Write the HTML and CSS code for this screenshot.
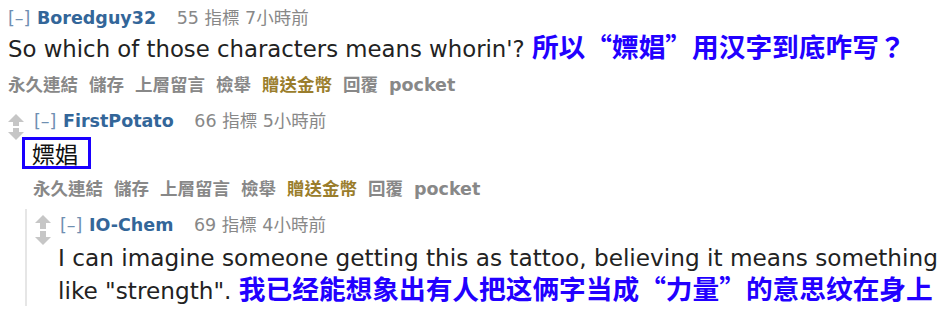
FILE: index.html
```html
<!DOCTYPE html>
<html lang="zh-Hant">

<head>
  <meta charset="UTF-8">
  <title>comments</title>
  <link rel="stylesheet" href="styles.css">
</head>

<body>
  <div class="comment top">
    <div class="entry">
      <p class="tagline">
        <span class="expand">[–]</span>
        <span class="author">Boredguy32</span>
        <span class="score">55 指標 7小時前</span>
      </p>
      <div class="md">
        So which of those characters means whorin'? <b class="note">所以“嫖娼”用汉字到底咋写？</b>
      </div>
      <ul class="buttons">
        <li>永久連結</li>
        <li>儲存</li>
        <li>上層留言</li>
        <li>檢舉</li>
        <li class="gild">贈送金幣</li>
        <li>回覆</li>
        <li>pocket</li>
      </ul>
    </div>

    <div class="comment second">
      <div class="midcol">
        <svg width="16" height="26" viewBox="0 0 16 26">
          <path d="M8 0 L16 8 L11 8 L11 12 L5 12 L5 8 L0 8 Z" fill="#c6c6c6"/>
          <path d="M8 26 L16 18 L11 18 L11 14 L5 14 L5 18 L0 18 Z" fill="#c6c6c6"/>
        </svg>
      </div>
      <div class="entry">
        <p class="tagline">
          <span class="expand">[–]</span>
          <span class="author">FirstPotato</span>
          <span class="score">66 指標 5小時前</span>
        </p>
        <div class="md">
          <span class="boxed">嫖娼</span>
        </div>
        <ul class="buttons">
          <li>永久連結</li>
          <li>儲存</li>
          <li>上層留言</li>
          <li>檢舉</li>
          <li class="gild">贈送金幣</li>
          <li>回覆</li>
          <li>pocket</li>
        </ul>
      </div>
    </div>

    <div class="child">
      <div class="comment">
        <div class="midcol">
          <svg width="16" height="30" viewBox="0 0 16 30">
            <path d="M8 0 L16 8 L11 8 L11 14 L5 14 L5 8 L0 8 Z" fill="#c6c6c6"/>
            <path d="M8 30 L16 22 L11 22 L11 16 L5 16 L5 22 L0 22 Z" fill="#c6c6c6"/>
          </svg>
        </div>
        <div class="entry">
          <p class="tagline">
            <span class="expand">[–]</span>
            <span class="author">IO-Chem</span>
            <span class="score">69 指標 4小時前</span>
          </p>
          <div class="md long">
            I can imagine someone getting this as tattoo, believing it means something<br>
            like "strength". <b class="note">我已经能想象出有人把这俩字当成“力量”的意思纹在身上</b>
          </div>
        </div>
      </div>
    </div>
  </div>
</body>

</html>
```

FILE: styles.css
```css
body {
  margin: 0;
  background-color: #fff;
  font-family: "DejaVu Sans", Verdana, "Noto Sans CJK TC", sans-serif;
  color: #222;
  overflow: hidden;
}

.top {
  padding: 7px 0 0 8px;
}

.comment {
  display: flex;
  flex-direction: column;
}

.second,
.child .comment {
  flex-direction: row;
}

.tagline {
  margin: 0;
  font-size: 17.5px;
  line-height: 22px;
  white-space: nowrap;
}

.expand {
  color: #6f8fb2;
  margin-right: 1px;
}

.author {
  color: #336699;
  font-weight: bold;
  margin-right: 15px;
}

.score {
  color: #888;
  font-family: "DejaVu Sans", "Noto Sans CJK TC", sans-serif;
}

.md {
  font-size: 22.8px;
  line-height: 32px;
  margin-top: 1px;
  white-space: nowrap;
}

.note {
  color: #2200ff;
  font-family: "Noto Sans CJK SC", sans-serif;
  font-weight: bold;
  font-size: 26.7px;
}

.buttons {
  list-style: none;
  margin: 8px 0 0 0;
  padding: 0;
  display: flex;
  gap: 11px;
  font-size: 17.5px;
  line-height: 24px;
  font-weight: bold;
  color: #888;
  font-family: "DejaVu Sans", "Noto Sans CJK TC", sans-serif;
}

.gild {
  color: #9a7d2c;
}

.midcol {
  flex-shrink: 0;
  width: 26px;
  padding-top: 4px;
}

.second {
  margin-top: 13px;
}

.second .md {
  margin-top: 5px;
  line-height: normal;
}

.second .buttons {
  margin: 8px 0 0 -1px;
}

.boxed {
  display: block;
  width: fit-content;
  margin-left: -12px;
  padding: 0 10px 0 7px;
  border: 3px solid #1a00ff;
  font-size: 23px;
  line-height: 26px;
  font-family: "Noto Sans CJK TC", sans-serif;
  color: #111;
}

.child {
  margin: 8px 0 0 17px;
  padding: 5px 0 0 8px;
  border-left: 2px solid #e6e6e6;
}

.child .midcol {
  width: 25px;
  padding-top: 1px;
}

.long {
  font-size: 23.2px;
  line-height: 30px;
  margin: 7px 0 0 -2px;
}
```
